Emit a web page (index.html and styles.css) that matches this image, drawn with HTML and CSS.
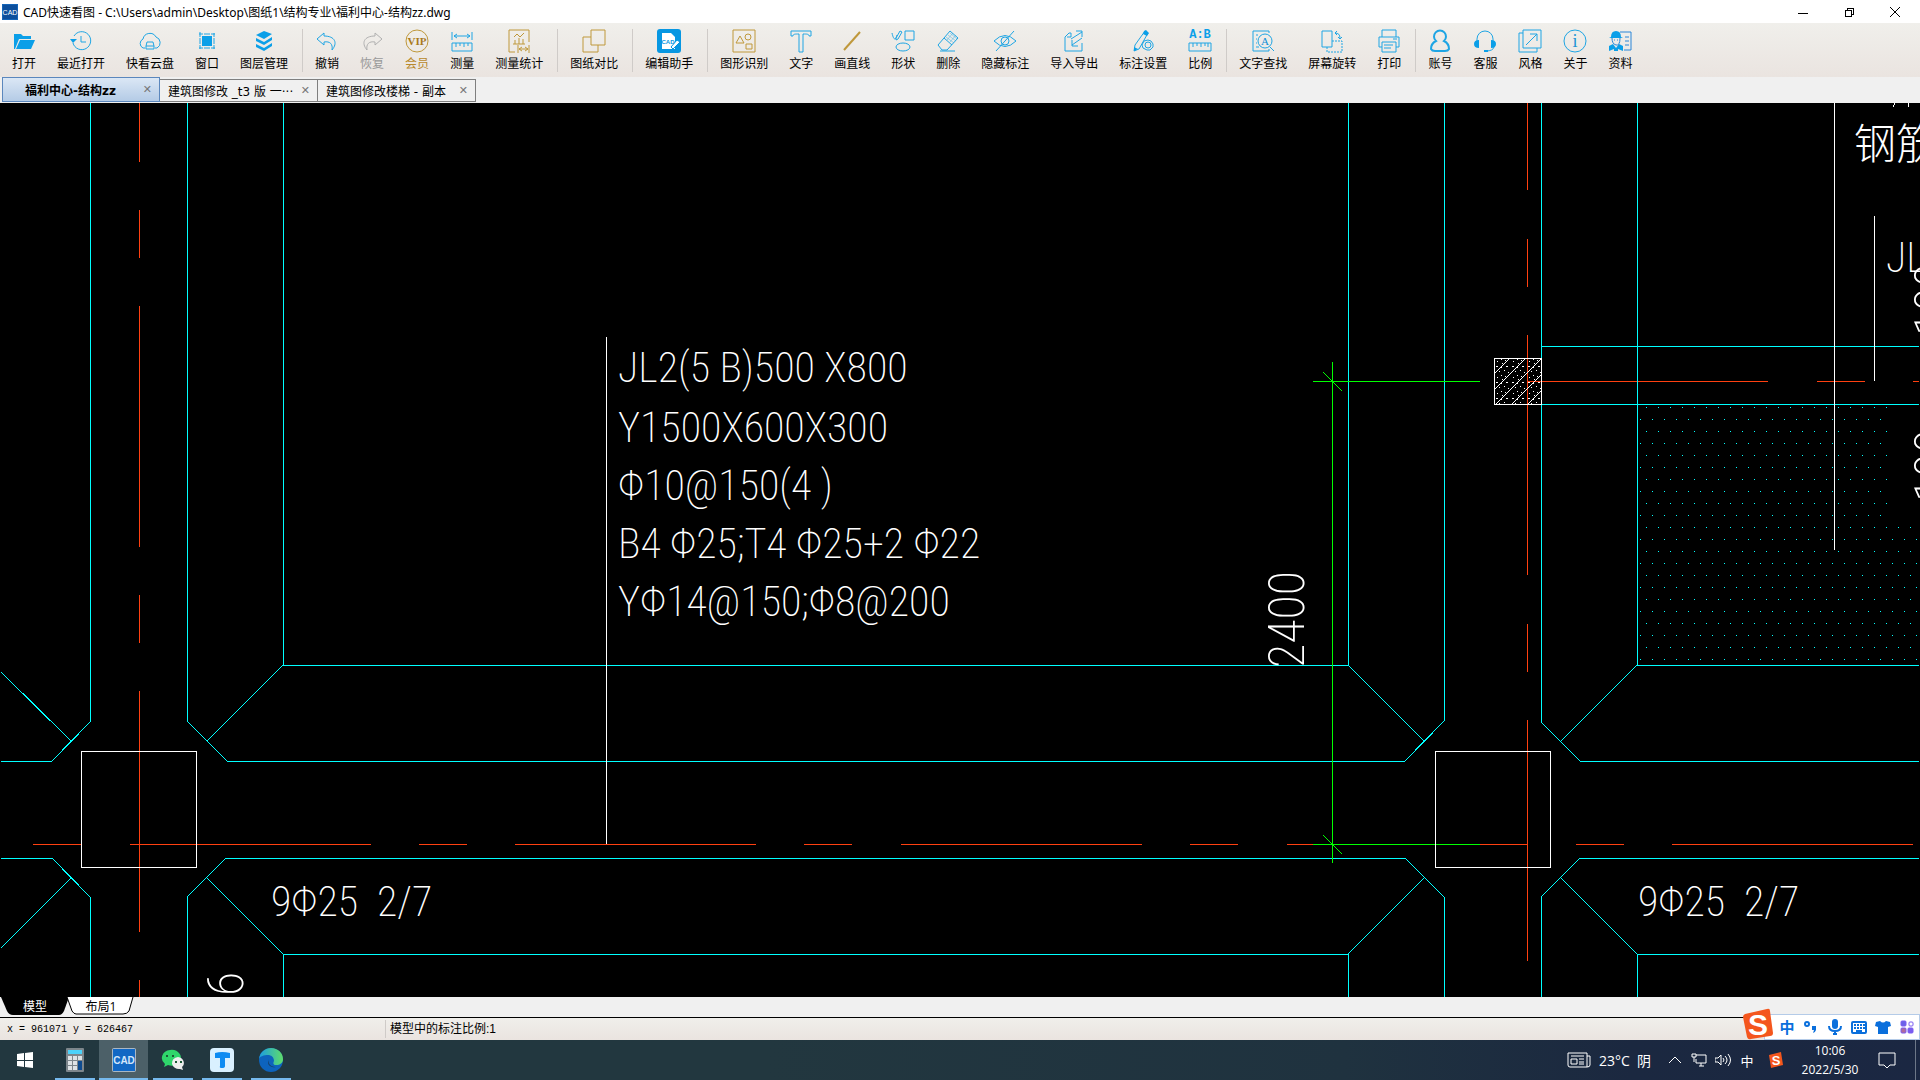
FILE: index.html
```html
<!DOCTYPE html>
<html lang="zh-CN">
<head>
    <meta charset="UTF-8">
    <meta name="viewport" content="width=device-width, initial-scale=1.0">
    <title>CAD快速看图</title>
    <link rel="stylesheet" href="styles.css">
</head>
<body>
    <header class="titlebar">
        <svg class="app-icon" viewBox="0 0 16 16">
            <rect width="16" height="16" fill="#1565b8"/>
            <rect x="1" y="1" width="14" height="14" fill="#0d4f9c"/>
            <text x="8" y="11" class="cad-mini">CAD</text>
        </svg>
        <h1 class="title">CAD快速看图 - C:\Users\admin\Desktop\图纸1\结构专业\福利中心-结构zz.dwg</h1>
        <div class="window-controls">
            <button class="win-btn" aria-label="最小化"><svg viewBox="0 0 10 10"><path d="M0 6H10"/></svg></button>
            <button class="win-btn" aria-label="还原"><svg viewBox="0 0 10 10"><path d="M1 3H7V9H1ZM3 3V1H9V7H7"/></svg></button>
            <button class="win-btn" aria-label="关闭"><svg viewBox="0 0 10 10"><path class="smooth" d="M0 0L10 10M10 0L0 10"/></svg></button>
        </div>
    </header>

    <nav class="toolbar">
        <div class="group">
            <button class="tool"><svg viewBox="0 0 24 24"><path class="solid" d="M2 20V5H9L11 7H19V10H7L3 20ZM4 20L8 11H23L19 20Z"/></svg>打开</button>
            <button class="tool"><svg viewBox="0 0 24 24"><path d="M5 7A9 9 0 1 1 4 14M12 7V13H17"/><path class="solid" d="M1 10H8L4 14Z"/></svg>最近打开</button>
            <button class="tool"><svg viewBox="0 0 24 24"><path d="M7 19H5A5 5 0 0 1 5 10A7 7 0 0 1 18 8A6 6 0 0 1 19 19H17"/><path d="M8 20V17L9 13H15L16 17V20ZM8 17H16"/></svg>快看云盘</button>
            <button class="tool"><svg viewBox="0 0 24 24"><rect class="solid" x="7" y="7" width="10" height="10"/><path d="M5 9V15M19 9V15M9 5H15M9 19H15M5 8V3M4 5H8M16 5H20M19 4V8M4 19H8M5 16V20M16 19H20M19 16V20"/></svg>窗口</button>
            <button class="tool"><svg viewBox="0 0 24 24"><path class="solid" d="M4 6L12 2L20 5L12 10ZM4 9L12 13L20 8V11L12 16L4 12ZM4 15L12 19L20 14V17L12 22L4 18Z"/></svg>图层管理</button>
        </div>
        <div class="group">
            <button class="tool"><svg viewBox="0 0 24 24"><path d="M9 4L2 10L9 16V13C15 12 18 15 17 21C23 14 20 7 9 7Z"/></svg>撤销</button>
            <button class="tool disabled" disabled><svg viewBox="0 0 24 24"><path d="M15 4L22 10L15 16V13C9 12 6 15 7 21C1 14 4 7 15 7Z"/></svg>恢复</button>
            <button class="tool gold-text"><svg class="gold" viewBox="0 0 24 24"><circle cx="12" cy="12" r="11"/><text x="12" y="16" class="vip">VIP</text></svg>会员</button>
            <button class="tool"><svg viewBox="0 0 24 24"><path d="M2 3V11M22 3V11M4 7H20M7 5L4 7L7 9M17 5L20 7L17 9M2 14H22V22H2ZM6 14V18M10 14V17M14 14V18M18 14V17"/></svg>测量</button>
            <button class="tool"><svg class="gold" viewBox="0 0 24 24"><path d="M8 23H2V1H22V13M7 8L10 5L13 8L17 4M8 15V11M12 15V9M16 15V10M6 15H18M11 16V24M22 16V24M12 20H21M15 18L12 20L15 22M18 18L21 20L18 22"/></svg>测量统计</button>
        </div>
        <div class="group">
            <button class="tool"><svg class="gold" viewBox="0 0 24 24"><path d="M9 1H23V16H9ZM9 8H1V23H16V16"/></svg>图纸对比</button>
        </div>
        <div class="group">
            <button class="tool"><svg viewBox="0 0 24 24"><rect width="24" height="24" rx="3" fill="#0797e2" stroke="none"/><path d="M5 4H14L18 8V20H5Z" fill="#fff" stroke="none"/><path d="M14 18L20 11L23 13L16 20Z" fill="#fff" stroke="#0797e2"/><text x="11" y="15" class="cad-edit">CAD</text></svg>编辑助手</button>
        </div>
        <div class="group">
            <button class="tool"><svg class="gold" viewBox="0 0 24 24"><path d="M1 1H23V23H1ZM4 14L8 7L12 14ZM14 15H20V20H14Z"/><circle cx="16" cy="8" r="3"/></svg>图形识别</button>
            <button class="tool"><svg viewBox="0 0 24 24"><path d="M2 2H22V7H20C20 5 18 5 14 5V23H10V5C6 5 4 5 4 7H2Z"/></svg>文字</button>
            <button class="tool"><svg class="gold thick" viewBox="0 0 24 24"><path d="M4 21L20 3"/></svg>画直线</button>
            <button class="tool"><svg viewBox="0 0 24 24"><path d="M14 2H23V11H14ZM1 4C3 13 5 10 6 6M5 9L9 2L11 3L7 10L5 11Z"/><ellipse cx="12" cy="18" rx="7" ry="4"/></svg>形状</button>
            <button class="tool"><svg viewBox="0 0 24 24"><path d="M14 2L22 9L11 21H6L2 16ZM8 9L16 16M4 22H19"/><path class="fine" d="M10 8L18 14M12 6L20 12M14 4L21 10M11 11L17 4M14 13L20 6"/></svg>删除</button>
            <button class="tool"><svg viewBox="0 0 24 24"><path d="M1 12Q12 1 23 12Q12 23 1 12ZM3 22L21 2"/><circle cx="12" cy="12" r="4"/></svg>隐藏标注</button>
            <button class="tool"><svg viewBox="0 0 24 24"><path d="M9 4H7L3 8V22H20V14M9 10L20 3M14 2H20V8M20 9L10 16M10 11V17H16M9 4V8H5"/></svg>导入导出</button>
            <button class="tool"><svg viewBox="0 0 24 24"><path d="M14 2L17 4L8 20L3 22L4 16ZM17 11L20 12L22 15L22 18L19 21H16L12 19L11 16L13 12Z"/><circle cx="17" cy="16" r="3"/><path class="solid" d="M13 2L15 1L18 4L16 7L12 5ZM3 18L7 20L3 22Z"/></svg>标注设置</button>
            <button class="tool"><svg viewBox="0 0 24 24"><text x="12" y="9" class="ratio">A:B</text><path d="M1 14H23V22H1ZM5 14V18M9 14V17M13 14V18M17 14V17M20 14V18"/></svg>比例</button>
        </div>
        <div class="group">
            <button class="tool"><svg viewBox="0 0 24 24"><path d="M18 4V2H2V22H18V20M5 6H7M5 10H6M5 14H6M5 18H8M19 18L23 22"/><circle cx="14" cy="12" r="7"/><text x="14" y="16" class="find-a">A</text></svg>文字查找</button>
            <button class="tool"><svg viewBox="0 0 24 24"><path d="M2 2H12V18H2Z"/><path stroke-dasharray="2 1" d="M12 12H22V23H7V18"/><path d="M15 4Q20 4 20 9M17 2L15 4L17 6M18 8L20 10L22 8"/></svg>屏幕旋转</button>
            <button class="tool"><svg viewBox="0 0 24 24"><path d="M5 8V1H19V8M5 18H2V8H22V18H19M5 13H19V23H5ZM7 16H16M7 19H14M16 10H20"/></svg>打印</button>
        </div>
        <div class="group">
            <button class="tool"><svg class="thick" viewBox="0 0 24 24"><path d="M8 12A6 6 0 1 1 16 12C20 14 21 18 21 20Q20 22 17 22H7Q4 22 3 20C3 18 4 14 8 12Z"/></svg>账号</button>
            <button class="tool"><svg viewBox="0 0 24 24"><path d="M4 12V10A8 8 0 0 1 20 10V12M21 18Q20 22 13 22"/><path class="solid" d="M6 11V19Q1 19 1 15T6 11ZM18 11V19Q23 19 23 15T18 11ZM11 21H15V23H11Z"/></svg>客服</button>
            <button class="tool"><svg viewBox="0 0 24 24"><path d="M5 4H1V23H19V19M5 1H23V19H5ZM8 16L19 5M12 5H19V12"/></svg>风格</button>
            <button class="tool"><svg viewBox="0 0 24 24"><circle cx="12" cy="12" r="11"/><text x="12" y="18" class="info">i</text></svg>关于</button>
            <button class="tool"><svg class="deep" viewBox="0 0 24 24"><path d="M12 3H23V21H16M17 8H21M17 12H21M17 16H21"/><path class="solid" d="M3 8Q3 2 8 2T13 8L15 9H1ZM1 22V17L5 15L8 19L11 15L15 17V22L10 20V22H6V20Z"/><path d="M4 9Q4 15 8 16T12 9M6 11H7M9 11H10"/></svg>资料</button>
        </div>
    </nav>

    <div class="file-tabs">
        <div class="file-tab active"><a href="#">福利中心-结构zz</a><button class="tab-close" aria-label="关闭标签">✕</button></div>
        <div class="file-tab"><a href="#">建筑图修改 _t3 版 一···</a><button class="tab-close" aria-label="关闭标签">✕</button></div>
        <div class="file-tab"><a href="#">建筑图修改楼梯 - 副本</a><button class="tab-close" aria-label="关闭标签">✕</button></div>
    </div>

    <main class="drawing">
        <svg class="model" viewBox="0 103 1920 894" preserveAspectRatio="xMinYMin slice">
            <defs>
                <pattern id="dots" x="1640" y="407" width="12" height="24" patternUnits="userSpaceOnUse">
                    <rect x="6" y="0" width="1" height="1" fill="#00ffff"/>
                    <rect x="0" y="12" width="1" height="1" fill="#00ffff"/>
                </pattern>
                <pattern id="concrete" x="1494" y="358" width="16" height="16" patternUnits="userSpaceOnUse">
                    <path d="M0 16L16 0" stroke="#fff"/>
                    <path d="M3 3h1M8 5h1M12 8h2M5 13h1M10 12h1M14 14h1M2 8h2M7 1h1M11 2h1M7 9h1" stroke="#fff"/>
                </pattern>
            </defs>

            <!-- axis lines -->
            <g class="axis">
                <path d="M139 103V162M139 210V258M139 306V547M139 595V643M139 691V932M139 980V997"/>
                <path d="M1527 103V190M1527 239V287M1527 335V575M1527 624V672M1527 720V961"/>
                <path d="M33 844H81M130 844H371M419 844H467M515 844H756M804 844H852M901 844H1142M1190 844H1238M1287 844H1527M1576 844H1624M1672 844H1913"/>
                <path d="M1527 381H1768M1817 381H1865M1913 381H1919"/>
            </g>

            <!-- footing outlines -->
            <g class="beam">
                <path d="M90 103V722L52 761H1M1 672L71 741"/>
                <path d="M187 103V721L227 761H1405L1444 721V103M207 741L283 665"/>
                <path d="M283 103V665H1348V103M1348 665L1424 741"/>
                <path d="M1541 103V722L1580 761H1919M1561 741L1637 665M1637 103V665H1919"/>
                <path d="M1541 346H1919M1541 404H1919"/>
                <path d="M1 858H52L90 897V997M71 878L1 948"/>
                <path d="M187 997V897L226 858H1405L1444 897V997M207 878L283 954M1424 878L1348 954"/>
                <path d="M283 997V954H1348V997"/>
                <path d="M1541 997V897L1580 858H1919M1561 878L1637 954M1919 954H1637V997"/>
            </g>
            <path d="M1640 407H1888V527H1919V664H1640Z" fill="url(#dots)"/>

            <!-- dimension 2400 -->
            <g class="dim">
                <path d="M1332 362V863M1313 381H1480M1323 372L1342 391M1313 844H1480M1323 835L1342 854"/>
            </g>

            <!-- columns and leaders -->
            <g class="outline">
                <rect x="81" y="751" width="115" height="116"/>
                <rect x="1435" y="751" width="115" height="116"/>
                <rect x="1494" y="358" width="47" height="46" fill="url(#concrete)"/>
                <path d="M606 337V844M1834 103V550M1874 216V381M1895 103L1893 107M1909 103L1908 107"/>
            </g>

            <g class="note">
                <text x="618" y="382">JL2(5 B)500 X800</text>
                <text x="618" y="442">Y1500X600X300</text>
                <text x="618" y="500">Φ10@150(4 )</text>
                <text x="618" y="558">B4 Φ25;T4 Φ25+2 Φ22</text>
                <text x="618" y="616">YΦ14@150;Φ8@200</text>
                <text x="271" y="916">9Φ25  2/7</text>
                <text x="1638" y="916">9Φ25  2/7</text>
                <text x="1886" y="272">JL</text>
                <text x="1854" y="159">钢筋</text>
                <text class="large" transform="translate(1304 668) rotate(-90)">2400</text>
                <text class="large" transform="translate(243 996) rotate(-90)">6</text>
                <text class="large" transform="translate(1950 336) rotate(-90)">100</text>
                <text class="large" transform="translate(1950 502) rotate(-90)">100</text>
            </g>
        </svg>
    </main>

    <div class="sheet-tabs">
        <a class="sheet active" href="#"><svg viewBox="0 0 68 18" preserveAspectRatio="none"><path d="M0 0H68L63 14Q61 18 58 18H12Q8 18 6 14Z" fill="#000"/></svg><span>模型</span></a>
        <a class="sheet" href="#"><svg viewBox="0 0 68 18" preserveAspectRatio="none"><path d="M0 0L5 14Q7 17 9 17H56Q60 17 62 14L66 0" fill="#fff" stroke="#000"/></svg><span>布局1</span></a>
    </div>

    <footer class="status">
        <span class="coords">x = 961071 y = 626467</span>
        <span class="scale">模型中的标注比例:1</span>
        <div class="ime">
            <svg class="ime-logo" viewBox="0 0 32 32"><path d="M3 6L25 1Q28 0 28 3L31 25Q31 28 28 28L9 31Q6 32 5 29L1 9Q1 7 3 6Z" fill="#f4561d"/><text x="16" y="27" class="s-big">S</text></svg>
            <button class="ime-btn">中</button>
            <button class="ime-btn" aria-label="标点"><svg viewBox="0 0 16 16"><circle cx="4" cy="5" r="2"/><path class="solid" d="M9 7h4v4q-1 3-3 3l1-3h-2z"/></svg></button>
            <button class="ime-btn" aria-label="语音"><svg viewBox="0 0 16 16"><rect class="solid" x="5" y="0" width="6" height="10" rx="3"/><path d="M2 7Q2 12 8 12T14 7M8 12V14"/><path d="M6 15H10"/></svg></button>
            <button class="ime-btn" aria-label="键盘"><svg viewBox="0 0 16 16"><rect x="1" y="3" width="14" height="11" rx="1"/><path stroke-dasharray="2 1" d="M3 6H14M3 9H14"/><path d="M5 12H11"/></svg></button>
            <button class="ime-btn" aria-label="皮肤"><svg viewBox="0 0 16 16"><path class="solid" d="M1 3L5 2Q8 5 11 2L15 3L16 7L13 8V15H3V8L0 7Z"/></svg></button>
            <button class="ime-btn tools" aria-label="工具"><svg viewBox="0 0 16 16"><rect x="2" y="2" width="5" height="5" rx="1" fill="#6a62e8"/><rect x="10" y="3" width="4" height="4" rx="1"/><rect x="2" y="9" width="5" height="5" rx="1" fill="#b06a9c"/><rect x="9" y="9" width="5" height="5" rx="1" fill="#7a5cf0"/></svg></button>
        </div>
    </footer>

    <div class="taskbar">
        <button class="task start" aria-label="开始"><svg viewBox="0 0 24 24"><path fill="#fff" d="M4 6L11 5V12H4ZM12 5L20 4V12H12ZM4 13H11V19L4 18ZM12 13H20V20L12 19Z"/></svg></button>
        <button class="task running" aria-label="计算器"><svg viewBox="0 0 24 24"><rect x="3" width="18" height="24" rx="1" fill="#7d868c"/><rect x="5" y="2" width="14" height="4" fill="#4cd2fa"/><path fill="#dfe3e6" d="M5 8h4v4H5zM10 8h4v4h-4zM15 8h4v4h-4zM5 13h4v4H5zM10 13h4v4h-4zM5 18h4v4H5zM10 18h4v4h-4z"/><path fill="#0e4b8f" d="M15 13h4v9h-4z"/></svg></button>
        <button class="task running current" aria-label="CAD快速看图"><svg viewBox="0 0 24 24"><rect width="24" height="24" rx="2" fill="#a9b7c4"/><rect x="1" y="1" width="22" height="22" fill="#1268c4"/><text x="12" y="16" class="cad-task">CAD</text></svg></button>
        <button class="task running" aria-label="微信"><svg viewBox="0 0 24 24"><path fill="#2fd66b" d="M9 2A9 8 0 0 0 4 16L3 19L7 17A9 8 0 1 0 9 2Z"/><path fill="#eee" d="M17 9A7 6 0 1 0 19 21L22 22L21 19A7 6 0 0 0 17 9Z"/><path fill="#1b5a36" d="M5 7h2v2H5zM11 7h2v2h-2zM14 13h2v2h-2zM19 13h2v2h-2z"/></svg></button>
        <button class="task running" aria-label="T"><svg viewBox="0 0 24 24"><rect width="24" height="24" rx="4" fill="#d9f0ff"/><path fill="#0d8bf2" d="M5 5Q12 3 20 5V10H15V18Q15 20 12 20T10 18V10H5Z"/></svg></button>
        <button class="task running" aria-label="Edge"><svg viewBox="0 0 24 24"><defs><linearGradient id="edge"><stop offset="0" stop-color="#1b9de2"/><stop offset="1" stop-color="#5fdc6a"/></linearGradient></defs><circle cx="12" cy="12" r="12" fill="#0d63bd"/><path fill="url(#edge)" d="M0 11C1 4 6 0 12 0C19 0 24 5 24 11C24 15 21 17 17 17C14 17 14 15 15 13C15 9 12 7 9 7C5 7 1 8 0 11Z"/><path fill="#173c60" d="M10 11C8 16 13 21 21 18C17 20 9 20 9 14Z"/></svg></button>
        <div class="tray">
            <button class="weather"><svg viewBox="0 0 24 16"><path d="M1 1H20V15H3Q1 15 1 13ZM20 4H23V13Q23 15 20 15M4 4H17M4 7H10V12H4ZM12 7H17M12 10H17M12 12H17"/></svg>23°C&nbsp; 阴</button>
            <button class="tray-btn" aria-label="显示隐藏的图标"><svg viewBox="0 0 16 16"><path d="M2 11L8 5L14 11"/></svg></button>
            <button class="tray-btn" aria-label="网络"><svg viewBox="0 0 16 16"><path d="M5 3H15V11H5V7M8 14H13M10 11V14M1 2H5V5H1ZM3 5V10"/></svg></button>
            <button class="tray-btn" aria-label="音量"><svg viewBox="0 0 16 16"><path d="M0 6H3L6 3V13L3 10H0ZM8 6Q10 8 8 10M10 4Q14 8 10 12M13 2Q18 8 13 14"/></svg></button>
            <button class="tray-btn">中</button>
            <button class="tray-btn sogou" aria-label="搜狗输入法"><svg viewBox="0 0 16 16"><path stroke="none" fill="#f4561d" d="M1 3L13 0L15 13L3 16Z"/><text x="8" y="13" class="s-small">S</text></svg></button>
            <time class="clock"><span>10:06</span><span>2022/5/30</span></time>
            <button class="notify" aria-label="通知"><svg viewBox="0 0 18 18"><path d="M1 2H17V14H12L9 17L6 14H1Z"/></svg></button>
        </div>
    </div>
</body>
</html>
```
FILE: styles.css
```css
* {
    box-sizing: border-box;
}
body {
    margin: 0;
    height: 100vh;
    display: flex;
    flex-direction: column;
    overflow: hidden;
    background: #f0f0f0;
    font-family: "Liberation Sans", "Noto Sans CJK SC", sans-serif;
    font-size: 12px;
    color: #000;
}
button {
    border: 0;
    padding: 0;
    background: none;
    color: inherit;
    font: inherit;
}
a {
    color: inherit;
    text-decoration: none;
}
svg {
    display: block;
    fill: none;
}

/* title bar */
.titlebar {
    flex: 0 0 23px;
    display: flex;
    align-items: center;
    padding: 0 2px;
    background: #fff;
}
.app-icon {
    width: 16px;
    height: 16px;
}
.title {
    flex: 1;
    margin: 0 0 0 5px;
    font: 12px "Noto Sans", "Noto Sans CJK SC", sans-serif;
}
.window-controls {
    display: flex;
}
.win-btn {
    width: 46px;
    display: flex;
    justify-content: center;
}
.win-btn svg {
    width: 10px;
    height: 10px;
    stroke: #000;
    shape-rendering: crispEdges;
}
.win-btn .smooth {
    shape-rendering: auto;
}

/* toolbar */
.toolbar {
    flex: 0 0 54px;
    display: flex;
    padding: 6px 0 5px;
    background: linear-gradient(#f0efeb, #eae4e0);
}
.group {
    display: flex;
    gap: 21px;
    padding: 0 14px 0 12px;
    border-right: 1px solid #cfcbc8;
}
.group:last-child {
    border-right: 0;
}
.tool {
    display: flex;
    flex-direction: column;
    align-items: center;
    gap: 1px;
    line-height: 18px;
    font-family: "Noto Sans CJK SC", sans-serif;
    white-space: nowrap;
}
.tool svg {
    width: 24px;
    height: 24px;
    stroke: #1ea5e4;
    stroke-width: 1;
    overflow: visible;
}
.tool .solid {
    fill: #0b9fe8;
    stroke: none;
}
.tool .fine {
    opacity: 0.4;
}
.tool svg.gold {
    stroke: #bf983b;
}
.tool svg.deep {
    stroke: #2a86d8;
}
.tool svg.thick {
    stroke-width: 2;
}
.tool.disabled {
    color: #999;
}
.tool.disabled svg {
    stroke: #b0b0b0;
}
.gold-text {
    color: #b8892c;
}
svg text {
    text-anchor: middle;
    stroke: none;
}
.cad-mini {
    font: 7px "Liberation Sans", sans-serif;
    fill: #fff;
}
.cad-edit {
    font: bold 6px "Liberation Sans", sans-serif;
    fill: #0797e2;
}
.cad-task {
    font: bold 10px "Liberation Sans", sans-serif;
    fill: #d3e6fa;
}
.vip {
    font: bold 11px "Liberation Serif", serif;
    fill: #a97a1c;
}
.ratio {
    font: bold 12px "Liberation Mono", monospace;
    fill: #0b9fe8;
}
.find-a {
    font: 11px "Liberation Serif", serif;
    fill: #0b8fd8;
}
.info {
    font: 18px "Liberation Serif", serif;
    fill: #1e95d4;
}

/* open files */
.file-tabs {
    flex: 0 0 26px;
    display: flex;
    align-items: flex-end;
    padding: 0 0 1px 2px;
    font-family: "DejaVu Sans", "Noto Sans CJK SC", sans-serif;
}
.file-tab {
    width: 158px;
    height: 23px;
    display: flex;
    align-items: center;
    justify-content: space-between;
    padding: 0 7px 0 8px;
    border: 1px solid #7f7f7f;
    border-left: 0;
    background: #f0f0f0;
    white-space: nowrap;
}
.file-tab.active {
    height: 25px;
    padding-left: 22px;
    border: 1px solid #5b87bd;
    background: linear-gradient(#dbe7f5, #b4cbe6);
    font-weight: bold;
}
.tab-close {
    color: #777;
    font: 11px "DejaVu Sans", sans-serif;
}

/* drawing area */
.drawing {
    flex: 1;
    min-height: 0;
    background: #000;
}
.model {
    width: 100%;
    height: 100%;
    shape-rendering: crispEdges;
}
.axis {
    stroke: #ff4010;
}
.beam {
    stroke: #00ffff;
}
.dim {
    stroke: #00ff00;
}
.outline {
    stroke: #fff;
}
.note text {
    fill: #fff;
    font-family: "Roboto Condensed", Roboto, "Noto Sans CJK SC", sans-serif;
    font-size: 42px;
    font-weight: 200;
    text-anchor: start;
    white-space: pre;
}
.note .large {
    font-size: 50px;
}

/* model / layout tabs */
.sheet-tabs {
    flex: 0 0 21px;
    display: flex;
    padding-left: 1px;
    border-bottom: 1px solid #000;
}
.sheet {
    width: 66px;
    height: 18px;
    display: grid;
    place-items: center;
    font: 12px "Open Sans", "Noto Sans CJK SC", sans-serif;
}
.sheet svg,
.sheet span {
    grid-area: 1 / 1;
}
.sheet svg {
    width: 68px;
    height: 18px;
}
.sheet.active {
    color: #fff;
}

/* status bar */
.status {
    position: relative;
    flex: 0 0 22px;
    display: flex;
    align-items: center;
    padding-left: 7px;
    background: linear-gradient(#f0efeb, #eae4e0);
}
.coords {
    flex: 0 0 378px;
    font: 10px "Liberation Mono", monospace;
}
.scale {
    padding-left: 4px;
    border-left: 1px solid #cfcbc8;
    line-height: 18px;
}
.ime {
    position: absolute;
    right: 0;
    bottom: 0;
    height: 26px;
    display: flex;
    align-items: center;
    padding-left: 10px;
    border: 1px solid #b4cbe8;
    background: #fff;
}
.ime-logo {
    position: absolute;
    left: -23px;
    bottom: -1px;
    width: 32px;
    height: 32px;
}
.s-big {
    font: bold 30px "Liberation Sans", sans-serif;
    fill: #fff;
}
.s-small {
    font: bold 13px "Liberation Sans", sans-serif;
    fill: #fff;
}
.ime-btn {
    width: 24px;
    height: 24px;
    display: grid;
    place-items: center;
    color: #0a6fdc;
    font: bold 15px "Noto Sans CJK SC", sans-serif;
    line-height: 24px;
}
.ime-btn svg {
    width: 16px;
    height: 16px;
    stroke: #0a6fdc;
    stroke-width: 2;
}
.ime-btn svg .solid {
    fill: #0a6fdc;
    stroke: none;
}
.tools svg {
    stroke: #7a5cf0;
    stroke-width: 1;
}

/* taskbar */
.taskbar {
    flex: 0 0 40px;
    display: flex;
    background: linear-gradient(90deg, #22373f, #22373f 40%, #1f323f 70%, #1b2840 85%, #1b2742);
    color: #fff;
    font-family: "Open Sans", "Noto Sans CJK SC", sans-serif;
}
.task {
    width: 49px;
    display: grid;
    place-items: center;
}
.task.start {
    width: 50px;
}
.task svg {
    width: 24px;
    height: 24px;
}
.running {
    background: linear-gradient(#76b9ed, #76b9ed) bottom / 40px 2px no-repeat;
}
.current {
    background: linear-gradient(#76b9ed, #76b9ed) bottom / 100% 2px no-repeat #4c6068;
}
.tray {
    margin-left: auto;
    margin-right: 4px;
    display: flex;
    align-items: center;
    border-right: 1px solid #6d7788;
}
.weather {
    display: flex;
    align-items: center;
    gap: 8px;
    margin-right: 12px;
    font-size: 14px;
}
.weather svg {
    width: 24px;
    height: 16px;
}
.tray svg {
    stroke: #fff;
}
.tray-btn {
    width: 24px;
    display: grid;
    place-items: center;
    font-size: 13px;
}
.tray-btn svg {
    width: 16px;
    height: 16px;
}
.sogou {
    margin-left: 5px;
}
.clock {
    width: 84px;
    display: flex;
    flex-direction: column;
    align-items: center;
    line-height: 19px;
}
.notify {
    padding: 0 19px 0 6px;
}
.notify svg {
    width: 18px;
    height: 18px;
}
```
